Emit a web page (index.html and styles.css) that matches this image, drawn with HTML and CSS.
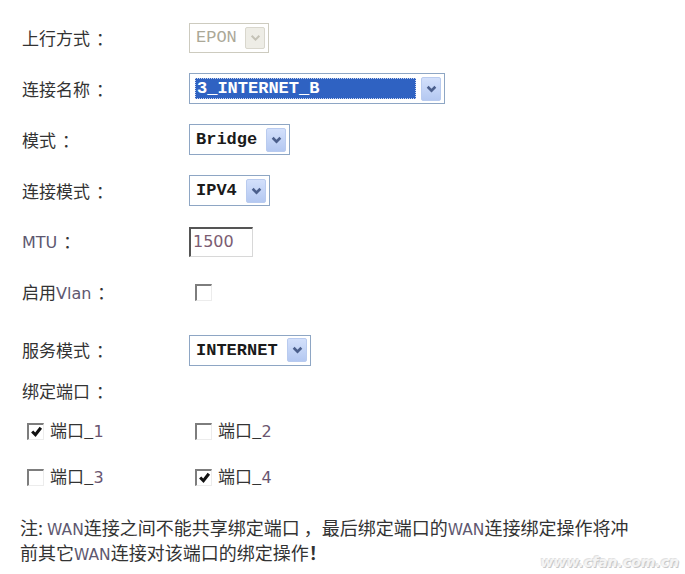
FILE: index.html
```html
<!DOCTYPE html>
<html lang="zh-CN">
<head>
  <meta charset="UTF-8">
  <title>WAN 连接设置</title>
  <link rel="stylesheet" href="styles.css">
</head>
<body>
  <main class="wan-form">
    <div class="row">
      <span class="label">上行方式<span class="colon">：</span></span>
      <div class="select select-disabled w-epon">
        <span class="value">EPON</span>
        <span class="arrow"><svg viewBox="0 0 10 7"><path d="M1.5 1.5 5 5 8.5 1.5"/></svg></span>
      </div>
    </div>

    <div class="row">
      <span class="label">连接名称<span class="colon">：</span></span>
      <div class="select w-name">
        <span class="value value-focus">3_INTERNET_B</span>
        <span class="arrow"><svg viewBox="0 0 10 7"><path d="M1.5 1.5 5 5 8.5 1.5"/></svg></span>
      </div>
    </div>

    <div class="row">
      <span class="label">模式<span class="colon">：</span></span>
      <div class="select w-mode">
        <span class="value">Bridge</span>
        <span class="arrow"><svg viewBox="0 0 10 7"><path d="M1.5 1.5 5 5 8.5 1.5"/></svg></span>
      </div>
    </div>

    <div class="row">
      <span class="label">连接模式<span class="colon">：</span></span>
      <div class="select w-ip">
        <span class="value">IPV4</span>
        <span class="arrow"><svg viewBox="0 0 10 7"><path d="M1.5 1.5 5 5 8.5 1.5"/></svg></span>
      </div>
    </div>

    <div class="row">
      <span class="label"><span class="latin">MTU</span><span class="colon">：</span></span>
      <div class="textbox">1500</div>
    </div>

    <div class="row">
      <span class="label">启用<span class="latin">Vlan</span><span class="colon">：</span></span>
      <span class="check check-vlan"></span>
    </div>

    <div class="row row-service">
      <span class="label">服务模式<span class="colon">：</span></span>
      <div class="select w-service">
        <span class="value">INTERNET</span>
        <span class="arrow"><svg viewBox="0 0 10 7"><path d="M1.5 1.5 5 5 8.5 1.5"/></svg></span>
      </div>
    </div>

    <div class="row row-bind">
      <span class="label">绑定端口<span class="colon">：</span></span>
    </div>

    <div class="ports">
      <label class="port">
        <span class="check checked"><svg viewBox="0 0 12 12"><path d="M2 6 5 9 10 2.5"/></svg></span>
        <span>端口_<span class="num">1</span></span>
      </label>
      <label class="port">
        <span class="check"></span>
        <span>端口_<span class="num">2</span></span>
      </label>
      <label class="port">
        <span class="check"></span>
        <span>端口_<span class="num">3</span></span>
      </label>
      <label class="port">
        <span class="check checked"><svg viewBox="0 0 12 12"><path d="M2 6 5 9 10 2.5"/></svg></span>
        <span>端口_<span class="num">4</span></span>
      </label>
    </div>

    <p class="note">注: <span class="latin-sm">WAN</span>连接之间不能共享绑定端口<span class="comma">，</span>最后绑定端口的<span class="latin-sm">WAN</span>连接绑定操作将冲<br>前其它<span class="latin-sm">WAN</span>连接对该端口的绑定操作<b>！</b></p>

    <div class="watermark">www.cfan.com.cn</div>
  </main>
</body>
</html>
```

FILE: styles.css
```css
* {
  margin: 0;
  padding: 0;
  box-sizing: border-box;
}

body {
  background: #fff;
  color: #333;
  font-family: "Noto Sans CJK SC", sans-serif;
  font-size: 17px;
}

.wan-form {
  position: relative;
  width: 685px;
  height: 574px;
  padding: 12px 0 0 22px;
}

.row {
  display: flex;
  align-items: center;
  height: 51px;
}

.row-service {
  height: 64px;
}

.row-bind {
  height: 18px;
}

.label {
  width: 167px;
  flex: none;
  line-height: 20px;
}

/* full-width punctuation sits centred in the reference font */
.colon {
  padding-left: 6px;
}

.comma {
  padding-left: 4px;
}

.latin {
  font-family: "DejaVu Sans", sans-serif;
  font-size: 16px;
  color: #5e5870;
}

.latin-sm {
  font-family: "DejaVu Sans", sans-serif;
  font-size: 15.5px;
  color: #5e5870;
}

/* dropdowns */
.select {
  display: flex;
  align-items: center;
  height: 31px;
  border: 1px solid #8ea6c4;
  padding: 2px 3px 2px 3px;
  background: #fff;
  font-family: "Liberation Mono", monospace;
  font-weight: bold;
  font-size: 17px;
  color: #1a1a1a;
}

.w-epon { width: 80px; height: 30px; }
.w-name { width: 256px; }
.w-mode { width: 101px; }
.w-ip { width: 81px; }
.w-service { width: 122px; }

.value {
  flex: 1;
  padding-left: 3px;
  line-height: 21px;
  white-space: nowrap;
}

.value-focus {
  margin: 0 5px 0 2px;
  padding-left: 2px;
  height: 21px;
  background: #2f62c2;
  color: #fff;
  outline: 1px dotted #c8d4ee;
  outline-offset: -1px;
}

.arrow {
  display: flex;
  align-items: center;
  justify-content: center;
  width: 20px;
  height: 24px;
  flex: none;
  border: 1px solid #b9cbef;
  border-radius: 2px;
  background: linear-gradient(#d3e0fb, #b4c8f1);
}

.arrow svg {
  width: 11px;
  height: 8px;
  fill: none;
  stroke: #4b5f8c;
  stroke-width: 2.4;
}

.select-disabled {
  border-color: #cdcbbf;
  color: #aba897;
  font-weight: normal;
}

.select-disabled .arrow {
  height: 22px;
  background: #eeede6;
  border-color: #d9d7cd;
}

.select-disabled .arrow svg {
  stroke: #c4c2b6;
  stroke-width: 1.8;
}

/* MTU box */
.textbox {
  width: 64px;
  height: 30px;
  padding-left: 2px;
  border-style: solid;
  border-width: 2px 1px 1px 2px;
  border-color: #555 #d8d8d8 #d8d8d8 #555;
  font-family: "DejaVu Sans", sans-serif;
  font-size: 16px;
  line-height: 26px;
  color: #7b5c72;
}

/* classic checkboxes */
.check {
  display: inline-flex;
  align-items: center;
  justify-content: center;
  width: 17px;
  height: 17px;
  flex: none;
  background: #fff;
  border-style: solid;
  border-width: 2px 1px 1px 2px;
  border-color: #7d7d7d #ececec #ececec #7d7d7d;
}

.check-vlan {
  margin-left: 6px;
}

.check svg {
  width: 13px;
  height: 13px;
  fill: none;
  stroke: #111;
  stroke-width: 2.8;
}

.ports {
  display: grid;
  grid-template-columns: 168px auto;
  row-gap: 28px;
  padding: 22px 0 0 5px;
}

.port {
  display: flex;
  align-items: center;
  gap: 6px;
  height: 18px;
  line-height: 18px;
}

.num {
  font-family: "DejaVu Sans", sans-serif;
  font-size: 16px;
  color: #6a5570;
}

.note {
  margin: 30px 0 0 -2px;
  line-height: 22px;
  font-size: 18px;
  color: #333;
}

.watermark {
  position: absolute;
  right: 6px;
  bottom: 4px;
  font-family: "DejaVu Sans", sans-serif;
  font-style: italic;
  font-weight: bold;
  font-size: 14px;
  color: #f4f4f4;
  text-shadow: 1px 1px 0 #c9c9c9, -1px -1px 0 #e2e2e2;
}
```
